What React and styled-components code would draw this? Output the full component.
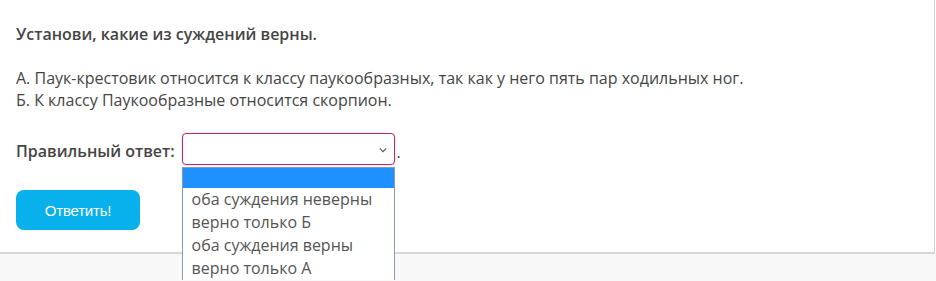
import React, { useState } from "react"
import styled, { createGlobalStyle } from "styled-components"

const Global = createGlobalStyle`
body{
    margin: 0;
    background: #ffffff;
    font-family: "Open Sans", "Noto Sans", sans-serif;
}
`

const opcoes = [
    "",
    "оба суждения неверны",
    "верно только Б",
    "оба суждения верны",
    "верно только А",
]

export default function App() {
    const [selecionado] = useState(0)

    return (
        <>
            <Global />
            <Cartao>
                <Titulo>Установи, какие из суждений верны.</Titulo>
                <Texto>
                    А. Паук-крестовик относится к классу паукообразных, так как у него пять пар ходильных ног.
                    <br />
                    Б. К классу Паукообразные относится скорпион.
                </Texto>
                <LinhaResposta>
                    <Rotulo>Правильный ответ:</Rotulo>
                    <CaixaSelect>
                        <Seta viewBox="0 0 10 6">
                            <path d="M1 1 L5 5 L9 1" />
                        </Seta>
                        <Lista>
                            {opcoes.map((op, i) => (
                                <Opcao key={i} ativo={i === selecionado} vazio={op === ""}>{op}</Opcao>
                            ))}
                        </Lista>
                    </CaixaSelect>
                    <Ponto>.</Ponto>
                </LinhaResposta>
                <Botao>Ответить!</Botao>
            </Cartao>
            <Rodape />
        </>
    )
}

const Cartao = styled.div`
position: relative;
z-index: 1;
width: 935px;
box-sizing: border-box;
background: #ffffff;
border-right: 1px solid #cfcfcf;
border-bottom: 2px solid #d6d6d6;
padding: 23px 0 22px 16px;
color: #454545;
`

const Rodape = styled.div`
height: 27px;
background: #f8f8f8;
`

const Titulo = styled.div`
font-size: 16px;
font-weight: 600;
line-height: 22px;
margin-bottom: 22px;
`

const Texto = styled.div`
font-size: 16px;
line-height: 22px;
margin-bottom: 22px;
`

const LinhaResposta = styled.div`
display: flex;
align-items: center;
height: 32px;
margin-bottom: 25px;
`

const Rotulo = styled.span`
font-size: 16px;
font-weight: 600;
margin-right: 7px;
padding-top: 3px;
`

const CaixaSelect = styled.div`
position: relative;
width: 213px;
height: 32px;
box-sizing: border-box;
border: 1px solid #b8287a;
border-radius: 4px;
background: #fff;
box-shadow: 0 0 2px rgba(200, 60, 130, 0.35);
`

const Seta = styled.svg`
position: absolute;
right: 7px;
top: 13px;
width: 8px;
height: 6px;
fill: none;
stroke: #555;
stroke-width: 1.4;
`

const Lista = styled.div`
position: absolute;
left: -1px;
top: 33px;
width: 213px;
box-sizing: border-box;
border: 1px solid #8a9bb0;
border-bottom: none;
background: #fff;
z-index: 2;
`

const Opcao = styled.div`
height: ${props => props.vazio ? "20px" : "23px"};
line-height: 23px;
padding-left: 9px;
font-size: 16px;
color: #555;
white-space: nowrap;
background: ${props => props.ativo ? "#1e90ff" : "transparent"};
`

const Ponto = styled.span`
font-size: 16px;
margin-left: 2px;
padding-top: 6px;
`

const Botao = styled.button`
display: block;
width: 124px;
height: 40px;
border: none;
border-radius: 8px;
background: #08b0ec;
color: #fff;
font-family: "Liberation Sans", Arial, sans-serif;
font-size: 15px;
letter-spacing: -0.2px;
cursor: pointer;
`
